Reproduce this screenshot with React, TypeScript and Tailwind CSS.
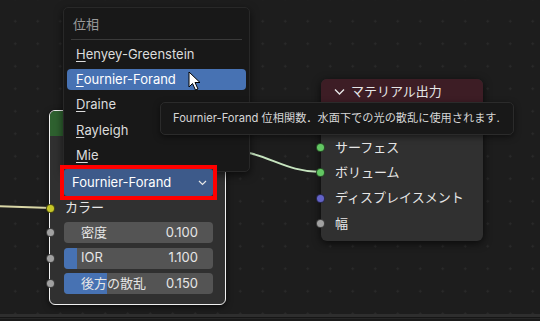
import React from 'react';

const font = "font-['Inter','Noto_Sans_CJK_JP',sans-serif]";

const phases = [
  { key: 'H', rest: 'enyey-Greenstein' },
  { key: 'F', rest: 'ournier-Forand', active: true },
  { key: 'D', rest: 'raine' },
  { key: 'R', rest: 'ayleigh' },
  { key: 'M', rest: 'ie' },
];

function Socket({ color }: { color: string }) {
  return <span className={`block w-[9px] h-[9px] rounded-full border border-black/60 ${color}`} />;
}

function Field({ label, value, fill }: { label: string; value: string; fill: number }) {
  return (
    <div className="relative flex items-center h-[21px]">
      <span className="absolute -left-[18px]">
        <Socket color="bg-[#a1a1a1]" />
      </span>
      <div className="relative flex-1 h-full rounded-[4px] bg-[#545454] overflow-hidden flex items-center justify-between pl-[17px] pr-[15px] text-[13px] text-[#e6e6e6]">
        <div className="absolute left-0 top-0 bottom-0 bg-[#4772b3]" style={{ width: fill }} />
        <span className="relative">{label}</span>
        <span className="relative">{value}</span>
      </div>
    </div>
  );
}

function OutRow({ color, label }: { color: string; label: string }) {
  return (
    <div className="relative flex items-center h-[25.3px] pl-[14px] text-[13px] text-[#e6e6e6]">
      <span className="absolute -left-[5px]">
        <Socket color={color} />
      </span>
      {label}
    </div>
  );
}

export default function App() {
  return (
    <div className={`relative w-[540px] h-[321px] overflow-hidden bg-[#1d1d1d] ${font}`}>
      {/* grid dots */}
      <div className="absolute inset-0 bg-[radial-gradient(circle,#2a2a2a_1px,transparent_1.2px)] bg-[length:22.5px_22.5px] bg-[position:4px_10px]" />

      {/* links */}
      <svg className="absolute inset-0" width="540" height="321">
        <path d="M-10 206 L51 208" stroke="#d9d6a6" strokeWidth="2" fill="none" />
        <path d="M225 150 C265 150 282 172 321 172" stroke="#c6e4bf" strokeWidth="2" fill="none" />
      </svg>

      {/* left node */}
      <div className="absolute left-[49px] top-[110px] w-[177px] h-[195px] rounded-[6px] border border-[#f0f0f0] bg-[#303030] shadow-[0_2px_6px_rgba(0,0,0,0.6)]">
        <div className="h-[25px] rounded-t-[5px] bg-[#2e612f]" />
        <div className="flex flex-col pl-[14px] pr-[12px] pt-[35px]">
          <div className="h-[25px]" />
          <div className="relative flex items-center h-[24px] text-[13px] text-[#e6e6e6]">
            <span className="absolute -left-[18px]">
              <Socket color="bg-[#c7c729]" />
            </span>
            <span className="pl-[1px]">カラー</span>
          </div>
          <div className="flex flex-col gap-[4.5px] mt-[2px]">
            <Field label="密度" value="0.100" fill={0} />
            <Field label="IOR" value="1.100" fill={13} />
            <Field label="後方の散乱" value="0.150" fill={43} />
          </div>
        </div>
      </div>

      {/* right node */}
      <div className="absolute left-[321px] top-[79px] w-[162px] h-[162px] rounded-[6px] bg-[#303030] shadow-[0_2px_8px_rgba(0,0,0,0.7)]">
        <div className="h-[25px] rounded-t-[6px] bg-[#3d1d25] flex items-center pl-[13px] gap-[6px] text-[13px] text-[#e6e6e6]">
          <svg width="11" height="8" viewBox="0 0 11 8">
            <path d="M1 1.5 L5.5 6 L10 1.5" stroke="#e6e6e6" strokeWidth="1.4" fill="none" />
          </svg>
          <span>マテリアル出力</span>
        </div>
        <div className="flex flex-col pt-[31px]">
          <OutRow color="bg-[#63c763]" label="サーフェス" />
          <OutRow color="bg-[#63c763]" label="ボリューム" />
          <OutRow color="bg-[#6363c7]" label="ディスプレイスメント" />
          <OutRow color="bg-[#a1a1a1]" label="幅" />
        </div>
      </div>

      {/* dropdown menu */}
      <div className="absolute left-[63px] top-[7px] w-[187px] h-[165px] rounded-[5px] bg-[#181818] border border-[#282828] shadow-[0_3px_8px_rgba(0,0,0,0.6)] px-[3px]">
        <div className="h-[31px] flex items-center pl-[6px] pt-[2px] text-[13px] text-[#9a9a9a]">位相</div>
        <div className="mx-[4px] h-px bg-[#3a3a3a]" />
        <div className="flex flex-col pt-[4px]">
          {phases.map((p) => (
            <div
              key={p.key}
              className={`h-[21px] mb-[4.3px] flex items-center pl-[9px] rounded-[4px] text-[13px] ${p.active ? 'bg-[#4772b3] text-white' : 'text-[#dcdcdc]'}`}
            >
              <span className="underline underline-offset-[2px]">{p.key}</span>
              {p.rest}
            </div>
          ))}
        </div>
      </div>

      {/* selected enum, highlighted */}
      <div className="absolute left-[60px] top-[165px] w-[157px] h-[35px] border-[4px] border-[#ff0000] bg-[#303030]">
        <div className="h-full rounded-[3px] bg-[#3d5a8a] flex items-center justify-between pl-[8px] pr-[6px] text-[13px] text-white">
          <span>Fournier-Forand</span>
          <svg width="9" height="6" viewBox="0 0 9 6">
            <path d="M1 1 L4.5 4.5 L8 1" stroke="#e6e6e6" strokeWidth="1.2" fill="none" />
          </svg>
        </div>
      </div>

      {/* tooltip */}
      <div className="absolute left-[160px] top-[102px] w-[354px] h-[33px] rounded-[5px] bg-[#181818] border border-[#2b2b2b] flex items-center pl-[12px] text-[11.2px] text-[#d6d6d6] whitespace-nowrap shadow-[0_2px_6px_rgba(0,0,0,0.5)]">
        Fournier-Forand 位相関数．水面下での光の散乱に使用されます.
      </div>

      {/* cursor */}
      <svg className="absolute left-[188px] top-[71px]" width="16" height="22" viewBox="0 0 16 22">
        <path d="M1 1 L1 16 L4.5 12.5 L7.5 19 L10 18 L7 11.5 L12 11.5 Z" fill="#ffffff" stroke="#000000" strokeWidth="1" strokeLinejoin="round" />
      </svg>

      {/* bottom edge */}
      <div className="absolute left-0 right-0 bottom-0 h-[7px] flex flex-col">
        <div className="h-[3px] bg-[#2e2e2e]" />
        <div className="h-[1px] bg-[#161616]" />
        <div className="h-[1px] bg-[#262626]" />
        <div className="flex-1 bg-[#1a1a1a]" />
      </div>
    </div>
  );
}
